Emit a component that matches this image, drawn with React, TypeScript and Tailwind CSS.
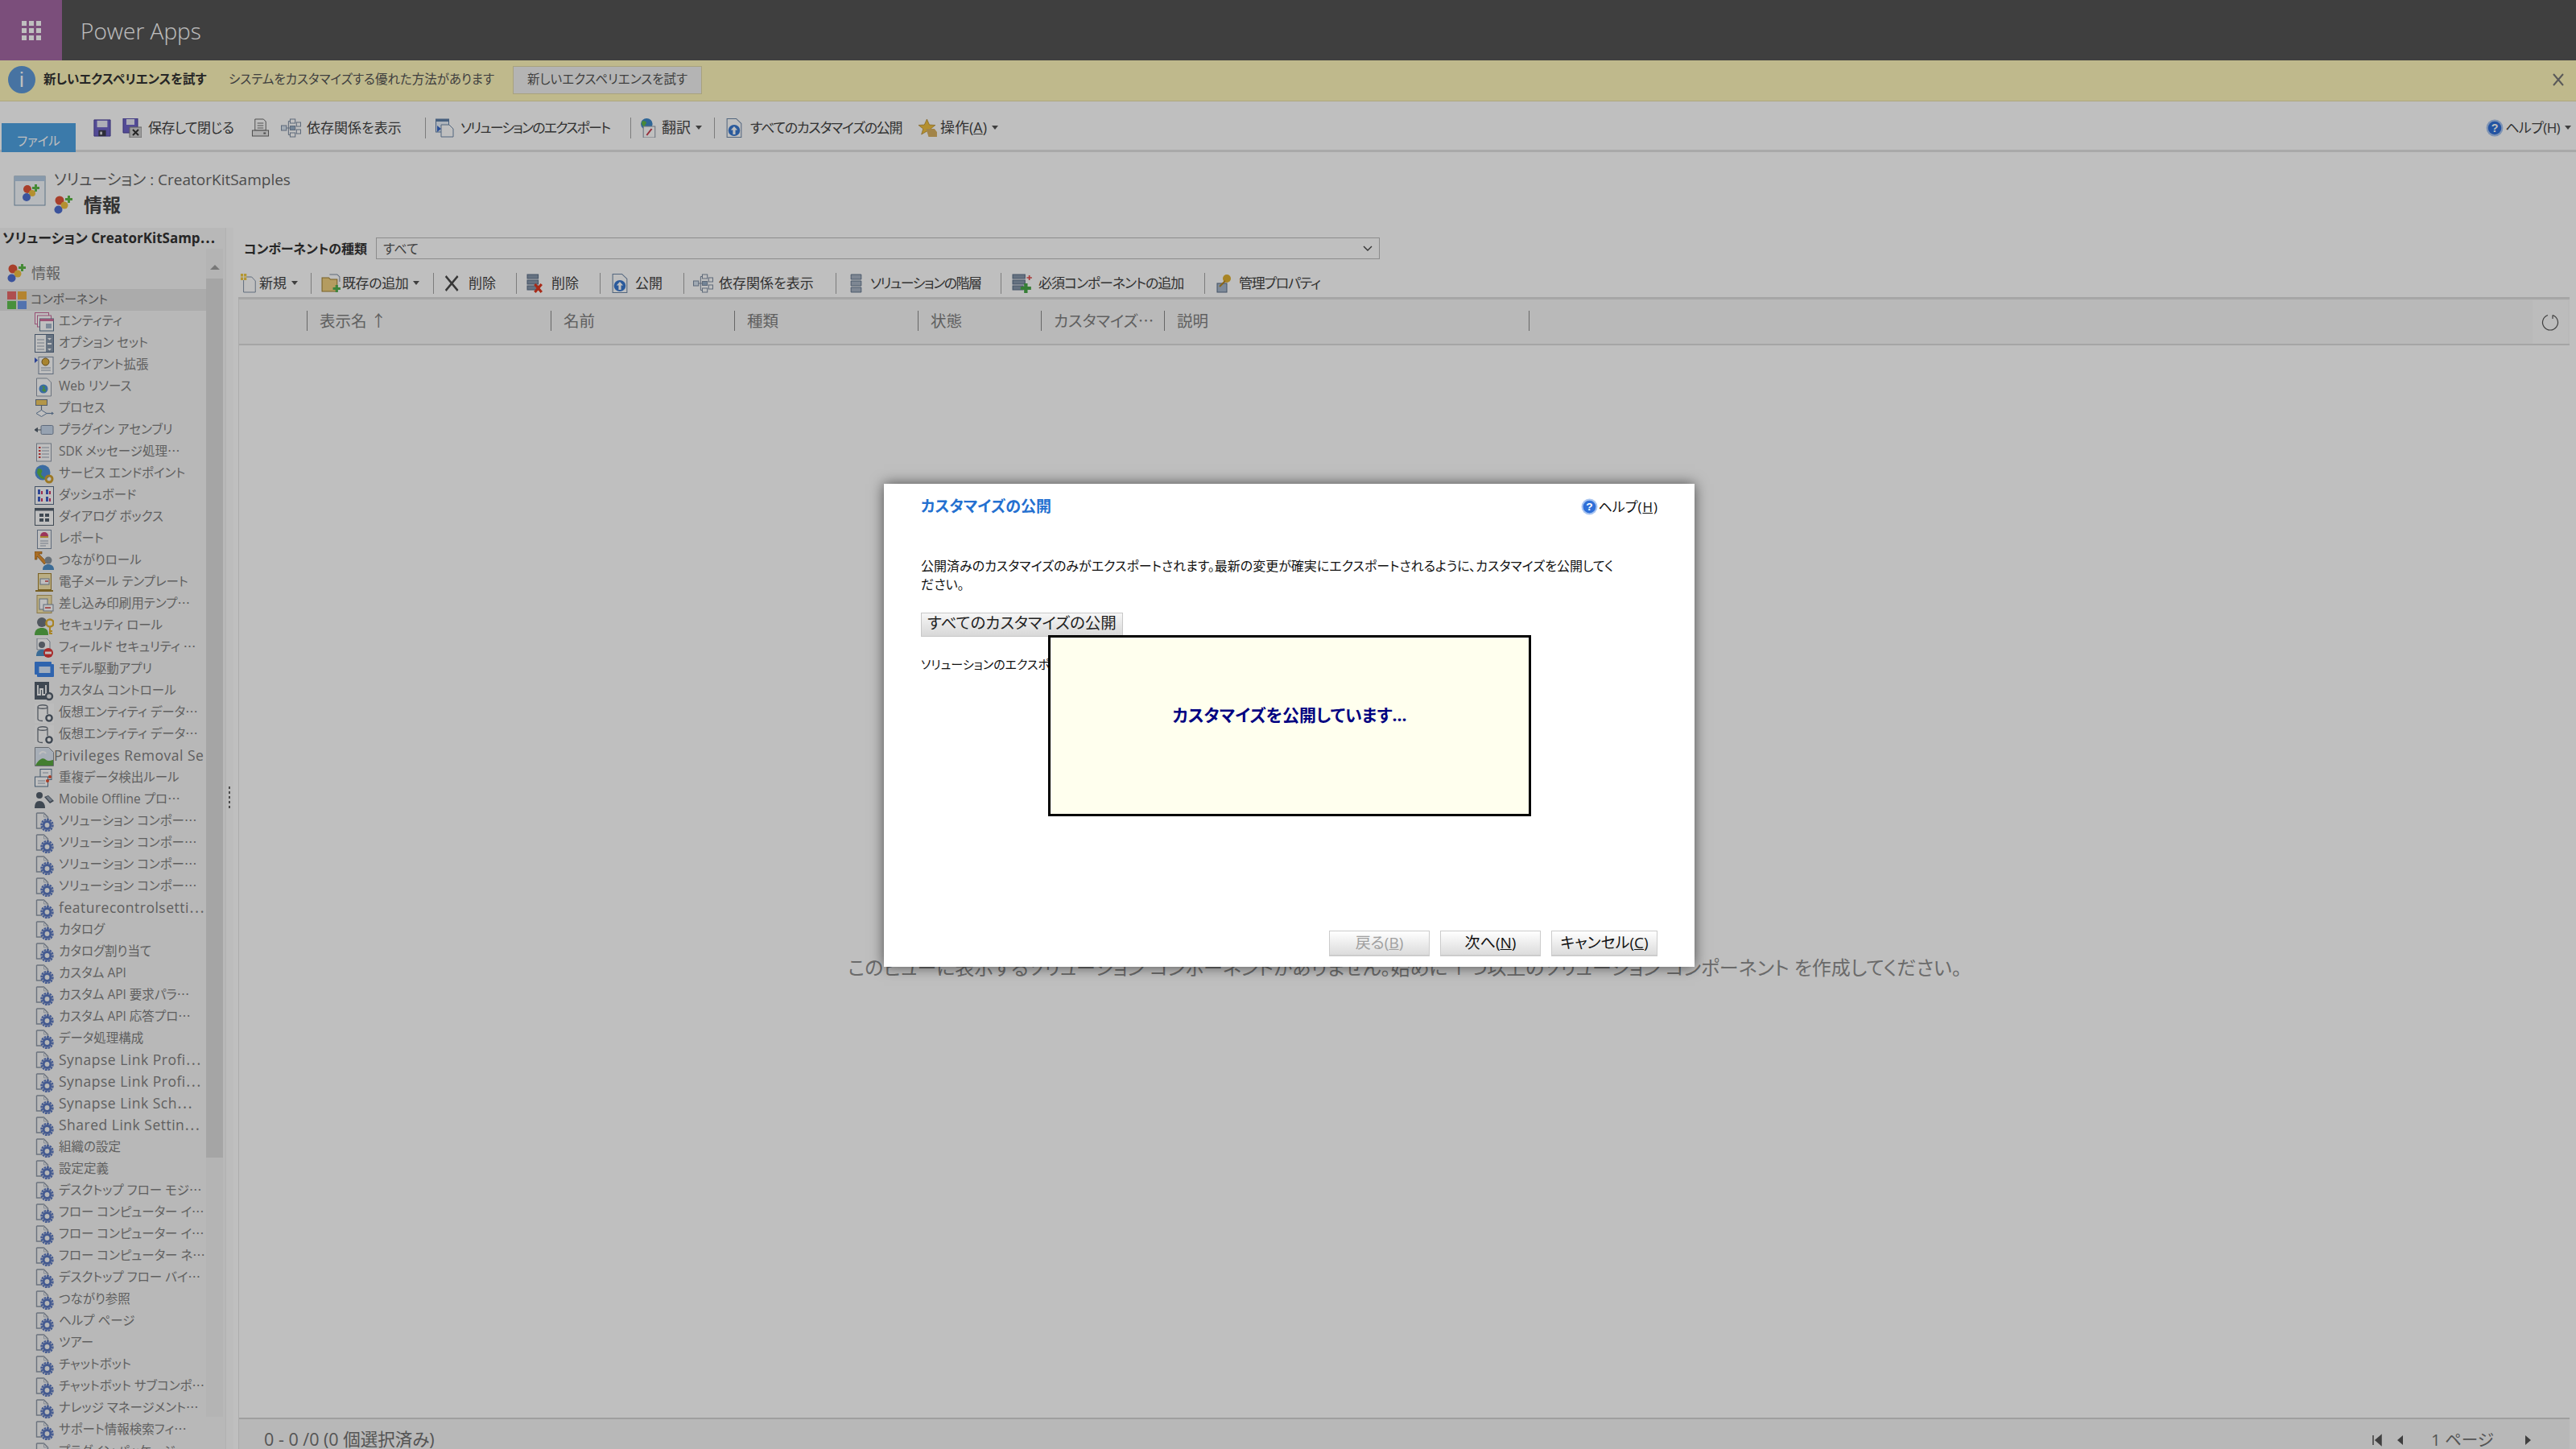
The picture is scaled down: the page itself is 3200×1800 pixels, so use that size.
import React from "react";

type IconProps = { className?: string };
type IconType = (p: IconProps) => React.ReactElement;

function Ic({ className = "w-6 h-6", children }: IconProps & { children: React.ReactNode }) {
  return (
    <svg viewBox="0 0 24 24" preserveAspectRatio="none" className={`shrink-0 ${className}`}>
      {children}
    </svg>
  );
}

function Balls({ className }: IconProps) {
  return (
    <Ic className={className}>
      <circle cx="7" cy="7" r="5.5" fill="#e0553a" />
      <circle cx="13" cy="13" r="4.5" fill="#f0c040" />
      <circle cx="5.5" cy="18.5" r="5" fill="#4f6fd0" />
      <path d="M17 1h3v3h3v3h-3v3h-3V7h-3V4h3z" fill="#5cb848" />
    </Ic>
  );
}

function Squares({ className }: IconProps) {
  return (
    <Ic className={className}>
      <rect x="0" y="0" width="11" height="11" fill="#e86a6a" />
      <rect x="13" y="0" width="11" height="11" fill="#f0b040" />
      <rect x="0" y="13" width="11" height="11" fill="#60c050" />
      <rect x="13" y="13" width="11" height="11" fill="#6e98e8" />
    </Ic>
  );
}

function GearDoc({ className }: IconProps) {
  return (
    <Ic className={className}>
      <path d="M2.500 1h9l5 5v6M2.500 1v19h7" fill="none" stroke="#8f99a8" strokeWidth="1.400" />
      <path d="M11.500 1v5h5" fill="none" stroke="#b4bcc8" strokeWidth="1" />
      <circle cx="15.500" cy="16" r="7" fill="none" stroke="#5b78c0" strokeWidth="2.400" strokeDasharray="2.600 1" />
      <circle cx="15.500" cy="16" r="4.400" fill="none" stroke="#5b78c0" strokeWidth="3" />
    </Ic>
  );
}

function Entity({ className }: IconProps) {
  return (
    <Ic className={className}>
      <rect x="0.500" y="0.500" width="17" height="14" fill="#fff" stroke="#c86a9a" />
      <rect x="3.500" y="4" width="17" height="14" fill="#fff" stroke="#c86a9a" />
      <rect x="6.500" y="8" width="17" height="15" fill="#fff" stroke="#5a7690" />
      <rect x="6.500" y="8" width="17" height="3" fill="#d0709c" />
      <rect x="14" y="14" width="7" height="6" fill="#a8b8cc" />
    </Ic>
  );
}

function OptionSet({ className }: IconProps) {
  return (
    <Ic className={className}>
      <rect x="0.500" y="0.500" width="23" height="22" fill="#fff" stroke="#5a6e88" />
      <rect x="14" y="1" width="9" height="21" fill="#8898ac" />
      <path d="M3 7h9M3 11h9M3 15h9M3 19h9" stroke="#9aa6b6" strokeWidth="1.200" />
      <path d="M16 5h5l-2.500 2.500zM16 18h5l-2.500 2.500z" fill="#fff" />
      <rect x="16" y="11" width="5" height="2" fill="#fff" />
    </Ic>
  );
}

function ClientExt({ className }: IconProps) {
  return (
    <Ic className={className}>
      <rect x="5" y="1.500" width="18" height="21" fill="#fff" stroke="#7e8ea4" />
      <circle cx="13.500" cy="7.500" r="4.500" fill="#e0b040" stroke="#806020" />
      <path d="M8 15h12M8 18h12" stroke="#9aa6b6" strokeWidth="1.200" />
      <path d="M0 2l4 3.500L0 9z" fill="#3858c8" />
    </Ic>
  );
}

function WebRes({ className }: IconProps) {
  return (
    <Ic className={className}>
      <path d="M2.500 1h13l5 5v17h-18z" fill="#fff" stroke="#8f99a8" />
      <circle cx="11" cy="14" r="5.500" fill="#4f90d8" />
      <path d="M8 10.500c3 1 4 3 1 5 1 2 3 1.500 4 2.500 2-2 0-4-1-4l1-3z" fill="#60b850" />
    </Ic>
  );
}

function Process({ className }: IconProps) {
  return (
    <Ic className={className}>
      <rect x="1.500" y="0.500" width="14" height="7" fill="#f0c860" stroke="#6e7a8a" />
      <path d="M8.500 7.500v6" stroke="#6e7a8a" strokeWidth="1.200" />
      <path d="M8.500 13.500l6.500 4-6.500 4-6.500-4z" fill="#fff" stroke="#6e88a8" />
      <path d="M15 17.500h7" stroke="#6e88a8" strokeWidth="1.200" />
      <path d="M24 17.500l-3-2v4z" fill="#6e88a8" />
    </Ic>
  );
}

function Plugin({ className }: IconProps) {
  return (
    <Ic className={className}>
      <rect x="8" y="5.500" width="15" height="11" rx="1.500" fill="#c8d8ec" stroke="#7e8ea4" />
      <path d="M0 11l3.500-2.500v5zM3 11h5" fill="#55606e" stroke="#55606e" />
    </Ic>
  );
}

function Sdk({ className }: IconProps) {
  return (
    <Ic className={className}>
      <rect x="2.500" y="1" width="18" height="22" fill="#fff" stroke="#8f99a8" />
      <path d="M9 6h9M9 10h9M9 14h9M9 18h9" stroke="#9aa6b6" strokeWidth="1.200" />
      <path d="M5 5h2.500v2H5zM5 9h2.500v2H5zM5 13h2.500v2H5zM5 17h2.500v2H5z" fill="#d84040" />
    </Ic>
  );
}

function Service({ className }: IconProps) {
  return (
    <Ic className={className}>
      <circle cx="10" cy="10" r="9.500" fill="#4f90d8" />
      <path d="M4 5c5 0 7 3 4 6 0 4 4 3 4 7-5 0-8-5-9-8z" fill="#5fb848" />
      <circle cx="18" cy="18" r="4" fill="none" stroke="#d0a030" strokeWidth="3" />
    </Ic>
  );
}

function Dashboard({ className }: IconProps) {
  return (
    <Ic className={className}>
      <rect x="0.500" y="0.500" width="23" height="22" fill="#fff" stroke="#5a6e88" />
      <path d="M4 4h3v6H4zM14 4h3v6h-3zM4 13h3v6H4zM14 13h3v6h-3z" fill="#4060c8" />
      <path d="M8 6h2v4H8zM18 6h2v4h-2zM8 15h2v4H8zM18 15h2v4h-2z" fill="#d03868" />
    </Ic>
  );
}

function DialogIc({ className }: IconProps) {
  return (
    <Ic className={className}>
      <rect x="0.500" y="0.500" width="23" height="21" fill="#fff" stroke="#55606e" />
      <rect x="0.500" y="0.500" width="23" height="3" fill="#55606e" />
      <path d="M6 7h5v4H6zM13 7h5v4h-5zM6 13h5v4H6zM13 13h5v4h-5z" fill="#55606e" />
    </Ic>
  );
}

function Report({ className }: IconProps) {
  return (
    <Ic className={className}>
      <rect x="3.500" y="0.500" width="17" height="23" fill="#fff" stroke="#7e8ea4" />
      <path d="M7 8a5 5 0 0 1 10 0z" fill="#d04878" />
      <path d="M7 8h10v2H7z" fill="#e0b040" />
      <path d="M7 14h10M7 17h10M7 20h7" stroke="#9aa6b6" strokeWidth="1.200" />
    </Ic>
  );
}

function Connection({ className }: IconProps) {
  return (
    <Ic className={className}>
      <path d="M0 0h9v3l-4 0 10 10-3 3L3 6v4H0z" fill="#e09030" stroke="#805010" strokeWidth="0.600" />
      <circle cx="17" cy="11" r="4.500" fill="#8a949e" />
      <path d="M10 23c0-5 3-7 7-7s7 2 7 7z" fill="#4f90c8" />
    </Ic>
  );
}

function Email({ className }: IconProps) {
  return (
    <Ic className={className}>
      <rect x="4.500" y="0.500" width="16" height="20" fill="#f8e8b0" stroke="#a08030" />
      <rect x="7" y="7" width="11" height="7" fill="#fff" stroke="#7e8ea4" />
      <path d="M13 10h4" stroke="#d04040" strokeWidth="1.500" />
      <path d="M1 21h22v2H1z" fill="#a08030" />
    </Ic>
  );
}

function MailMerge({ className }: IconProps) {
  return (
    <Ic className={className}>
      <rect x="3" y="0.500" width="18" height="22" fill="#f8e8b0" stroke="#b8a060" />
      <rect x="6" y="5" width="10" height="13" fill="#fff" stroke="#7e8ea4" />
      <rect x="11" y="12" width="12" height="8" fill="#fff" stroke="#7e8ea4" />
      <path d="M13 16h7" stroke="#d04040" strokeWidth="1.500" />
    </Ic>
  );
}

function Security({ className }: IconProps) {
  return (
    <Ic className={className}>
      <circle cx="9" cy="7" r="6" fill="#6e7680" />
      <path d="M0 23c0-7 4-9 9-9s8 2 8 9z" fill="#58b048" />
      <circle cx="19" cy="8" r="4.500" fill="none" stroke="#e0b030" strokeWidth="2.600" />
      <path d="M19 12v10M19 18h3M19 21h3" stroke="#e0b030" strokeWidth="2" />
    </Ic>
  );
}

function FieldSec({ className }: IconProps) {
  return (
    <Ic className={className}>
      <path d="M3 0h12l4 4v10H3z" fill="#fff" stroke="#8f99a8" />
      <circle cx="9" cy="8" r="4" fill="#6e7680" />
      <path d="M2 22c0-6 3-8 7-8s6 2 6 8z" fill="#4f90c8" />
      <circle cx="17" cy="18" r="6" fill="#e03838" />
      <rect x="13" y="16.500" width="8" height="3" fill="#fff" />
    </Ic>
  );
}

function AppIc({ className }: IconProps) {
  return (
    <Ic className={className}>
      <rect x="0" y="2" width="21" height="16" rx="1" fill="#3f86e8" />
      <rect x="3" y="5" width="21" height="16" rx="1" fill="#3f86e8" />
      <rect x="5.500" y="8" width="14" height="8" fill="#d8e8fc" />
    </Ic>
  );
}

function CustomControl({ className }: IconProps) {
  return (
    <Ic className={className}>
      <rect x="0" y="0" width="18" height="22" fill="#55606e" />
      <path d="M4 4v12h3V9h3v7h4V4" fill="none" stroke="#fff" strokeWidth="1.800" />
      <circle cx="18" cy="18" r="4" fill="#e8e8e8" stroke="#55606e" strokeWidth="2.400" />
    </Ic>
  );
}

function Database({ className }: IconProps) {
  return (
    <Ic className={className}>
      <rect x="0" y="0" width="24" height="24" fill="#fbfbfb" />
      <path d="M4 4c0-3 12-3 12 0v9M4 4c0 3 12 3 12 0M4 4v15c0 2 3 2.500 6 2.500" fill="none" stroke="#6e7680" strokeWidth="1.300" />
      <circle cx="18" cy="18" r="3.600" fill="#fff" stroke="#55606e" strokeWidth="2.400" />
    </Ic>
  );
}

function BrokenImg({ className }: IconProps) {
  return (
    <Ic className={className}>
      <path d="M0.500 0.500h17l6 6v17h-23z" fill="#dfe8f4" stroke="#8a8f96" />
      <path d="M1 23c4-8 9-10 12-8 3 3 6 2 10 1v7z" fill="#5aa840" />
      <path d="M6 9c3-5 7-3 8-1" fill="none" stroke="#fff" strokeWidth="2" />
    </Ic>
  );
}

function Duplicate({ className }: IconProps) {
  return (
    <Ic className={className}>
      <rect x="7" y="0.500" width="14" height="13" fill="#fff" stroke="#5a7690" />
      <rect x="0.500" y="10" width="16" height="12" fill="#fff" stroke="#5a7690" />
      <path d="M10 5h7M4 15h9M4 18h9" stroke="#9aa6b6" />
      <circle cx="19" cy="10" r="2" fill="#e05030" />
      <circle cx="16" cy="15" r="2" fill="#e05030" />
    </Ic>
  );
}

function Mobile({ className }: IconProps) {
  return (
    <Ic className={className}>
      <circle cx="6" cy="6" r="4" fill="#55606e" />
      <path d="M0 22c0-6 2-9 6-9s7 3 7 9z" fill="#55606e" />
      <path d="M12 8l5-2 7 7-5 3z" fill="#55606e" />
      <path d="M14 8l3-1 5 5-3 2z" fill="#9aa6b6" />
    </Ic>
  );
}

function FloppyIc({ className }: IconProps) {
  return (
    <Ic className={className}>
      <path d="M1 1h22v22H1z" fill="#6f64c8" stroke="#484098" />
      <rect x="5" y="2" width="14" height="9" fill="#e8e8f4" />
      <rect x="7" y="15" width="10" height="8" fill="#3c3c4c" />
      <rect x="9" y="17" width="3" height="4" fill="#d8d8e0" />
    </Ic>
  );
}

function SaveClose({ className }: IconProps) {
  return (
    <Ic className={className}>
      <path d="M1 0h18v18H1z" fill="#6f64c8" stroke="#484098" />
      <rect x="5" y="1" width="10" height="7" fill="#e8e8f4" />
      <rect x="9" y="11" width="15" height="13" fill="#d0d0d0" stroke="#808080" />
      <path d="M13 14l7 7M20 14l-7 7" stroke="#333" strokeWidth="2" />
    </Ic>
  );
}

function Printer({ className }: IconProps) {
  return (
    <Ic className={className}>
      <path d="M5 1h11l3 3v11H5z" fill="#fff" stroke="#666" />
      <path d="M8 6h8M8 9h8M8 12h8" stroke="#666" />
      <rect x="1.500" y="15" width="21" height="7" fill="#e8e8e8" stroke="#666" />
      <rect x="16" y="17.500" width="3" height="2" fill="#666" />
    </Ic>
  );
}

function Dependencies({ className }: IconProps) {
  return (
    <Ic className={className}>
      <rect x="0.500" y="9" width="6" height="6" fill="#d8e4f0" stroke="#7e8ea4" />
      <rect x="11" y="1" width="6" height="5" fill="#fff" stroke="#7e8ea4" />
      <rect x="11" y="9.500" width="6" height="5" fill="#9ab0c8" stroke="#7e8ea4" />
      <rect x="11" y="18" width="6" height="5" fill="#fff" stroke="#7e8ea4" />
      <rect x="18.500" y="5" width="5" height="5" fill="#fff" stroke="#7e8ea4" />
      <rect x="18.500" y="14" width="5" height="5" fill="#fff" stroke="#7e8ea4" />
      <path d="M6.500 12H11M9 3.500v17M9 3.500h2M9 20.500h2" fill="none" stroke="#7e8ea4" />
    </Ic>
  );
}

function ExportIc({ className }: IconProps) {
  return (
    <Ic className={className}>
      <rect x="0.500" y="1" width="16" height="16" fill="#e8f0fa" stroke="#6080a8" />
      <rect x="0.500" y="1" width="16" height="3" fill="#6080a8" />
      <path d="M7 8h10l5 5v10H7z" fill="#fff" stroke="#6e88a8" />
      <path d="M2 9l5 4-5 4z" fill="#3868c8" />
    </Ic>
  );
}

function Translate({ className }: IconProps) {
  return (
    <Ic className={className}>
      <circle cx="8" cy="7" r="7" fill="#3f88c8" />
      <path d="M3 3c5 0 6 3 3 5 0 3 2 3 3 5-4 0-6-4-7-7z" fill="#60b848" />
      <path d="M4 10h14v14H4z" fill="#fff" stroke="#8f99a8" />
      <path d="M14 13l-6 8" stroke="#c84050" strokeWidth="2" />
    </Ic>
  );
}

function Publish({ className }: IconProps) {
  return (
    <Ic className={className}>
      <path d="M3 0.500h11l6 6v17H3z" fill="#fff" stroke="#6e88a8" />
      <circle cx="11.500" cy="15" r="7" fill="#3878d0" />
      <path d="M11.500 10l-4 4.500h2.500V20h3v-5.500h2.500z" fill="#fff" />
    </Ic>
  );
}

function Star({ className }: IconProps) {
  return (
    <Ic className={className}>
      <path d="M10 1l3 7 7 .5-5.500 4.500 2 7-6.500-4-6.500 4 2-7L0 8.500 7 8z" fill="#f0c040" stroke="#a07820" strokeWidth="0.600" />
      <path d="M9 13h10l3 4v6H12z" fill="#d8b060" />
    </Ic>
  );
}

function Help({ className }: IconProps) {
  return (
    <svg viewBox="0 0 20 20" className={`shrink-0 ${className}`}>
      <circle cx="10" cy="10" r="9.500" fill="#a8c4f0" />
      <circle cx="10" cy="10" r="7.500" fill="#2f6fd8" />
      <text x="10" y="14.500" textAnchor="middle" fontSize="13" fontWeight="700" fill="#fff" fontFamily="Liberation Sans">
        ?
      </text>
    </svg>
  );
}

function NewDoc({ className }: IconProps) {
  return (
    <Ic className={className}>
      <path d="M5 4h11l5 5v14H5z" fill="#fff" stroke="#7e8ea4" />
      <rect x="1" y="0" width="8" height="8" fill="#f0c840" />
      <path d="M1 4h8M5 0v8" stroke="#fff" />
    </Ic>
  );
}

function AddExisting({ className }: IconProps) {
  return (
    <Ic className={className}>
      <path d="M1 5h8l2 2h8v15H1z" fill="#f0d080" stroke="#a08030" />
      <path d="M10 1h9l3 3v6" fill="none" stroke="#7e8ea4" />
      <path d="M17 14h3v3h3v3h-3v3h-3v-3h-3v-3h3z" fill="#50b050" />
    </Ic>
  );
}

function DeleteX({ className }: IconProps) {
  return (
    <Ic className={className}>
      <path d="M3 2l8 8 8-8 2 2-8 8 8 8-2 2-8-8-8 8-2-2 8-8-8-8z" fill="#4a4a4a" />
    </Ic>
  );
}

function DeleteStack({ className }: IconProps) {
  return (
    <Ic className={className}>
      <path d="M1 1h13v5H1zM1 8h13v5H1zM1 15h13v5H1z" fill="#8898ac" stroke="#5a6e88" />
      <path d="M10 13l8 10M18 13l-8 10" stroke="#e03820" strokeWidth="3" />
    </Ic>
  );
}

function Hierarchy({ className }: IconProps) {
  return (
    <Ic className={className}>
      <path d="M4 1h16v6H4zM4 9h16v6H4zM4 17h16v6H4z" fill="#a8b4c4" stroke="#5a6e88" />
    </Ic>
  );
}

function AddRequired({ className }: IconProps) {
  return (
    <Ic className={className}>
      <path d="M1 1h14v5H1zM1 8h14v5H1zM1 15h12v5H1z" fill="#8898ac" stroke="#5a6e88" />
      <path d="M14 12h4v4h4v4h-4v4h-4v-4h-4v-4h4z" fill="#48a848" />
      <path d="M20 2v6M17 5h6" stroke="#e05050" strokeWidth="1.600" />
    </Ic>
  );
}

function Admin({ className }: IconProps) {
  return (
    <Ic className={className}>
      <rect x="3" y="12" width="12" height="11" fill="#a8b8cc" stroke="#5a6e88" />
      <circle cx="15" cy="6" r="5" fill="#e0b030" />
      <path d="M13 9l-7 7" stroke="#b88820" strokeWidth="2" />
    </Ic>
  );
}

const Caret = () => <span className="ml-[6px] h-0 w-0 border-x-[4px] border-t-[5px] border-x-transparent border-t-[#555]" />;

const navItems: [string, IconType][] = [
  ["エンティティ", Entity],
  ["オプション セット", OptionSet],
  ["クライアント拡張", ClientExt],
  ["Web リソース", WebRes],
  ["プロセス", Process],
  ["プラグイン アセンブリ", Plugin],
  ["SDK メッセージ処理⋯", Sdk],
  ["サービス エンドポイント", Service],
  ["ダッシュボード", Dashboard],
  ["ダイアログ ボックス", DialogIc],
  ["レポート", Report],
  ["つながりロール", Connection],
  ["電子メール テンプレート", Email],
  ["差し込み印刷用テンプ⋯", MailMerge],
  ["セキュリティ ロール", Security],
  ["フィールド セキュリティ ⋯", FieldSec],
  ["モデル駆動アプリ", AppIc],
  ["カスタム コントロール", CustomControl],
  ["仮想エンティティ データ⋯", Database],
  ["仮想エンティティ データ⋯", Database],
  ["Privileges Removal Se", BrokenImg],
  ["重複データ検出ルール", Duplicate],
  ["Mobile Offline プロ⋯", Mobile],
  ["ソリューション コンポー⋯", GearDoc],
  ["ソリューション コンポー⋯", GearDoc],
  ["ソリューション コンポー⋯", GearDoc],
  ["ソリューション コンポー⋯", GearDoc],
  ["featurecontrolsetti⋯", GearDoc],
  ["カタログ", GearDoc],
  ["カタログ割り当て", GearDoc],
  ["カスタム API", GearDoc],
  ["カスタム API 要求パラ⋯", GearDoc],
  ["カスタム API 応答プロ⋯", GearDoc],
  ["データ処理構成", GearDoc],
  ["Synapse Link Profi⋯", GearDoc],
  ["Synapse Link Profi⋯", GearDoc],
  ["Synapse Link Sch⋯", GearDoc],
  ["Shared Link Settin⋯", GearDoc],
  ["組織の設定", GearDoc],
  ["設定定義", GearDoc],
  ["デスクトップ フロー モジ⋯", GearDoc],
  ["フロー コンピューター イ⋯", GearDoc],
  ["フロー コンピューター イ⋯", GearDoc],
  ["フロー コンピューター ネ⋯", GearDoc],
  ["デスクトップ フロー バイ⋯", GearDoc],
  ["つながり参照", GearDoc],
  ["ヘルプ ページ", GearDoc],
  ["ツアー", GearDoc],
  ["チャットボット", GearDoc],
  ["チャットボット サブコンポ⋯", GearDoc],
  ["ナレッジ マネージメント⋯", GearDoc],
  ["サポート情報検索フィ⋯", GearDoc],
  ["プラグイン パッケージ", GearDoc],
];

const columns = [
  { label: "表示名 ↑", width: "w-[303px]" },
  { label: "名前", width: "w-[228px]" },
  { label: "種類", width: "w-[228px]" },
  { label: "状態", width: "w-[153px]" },
  { label: "カスタマイズ⋯", width: "w-[153px]" },
  { label: "説明", width: "w-[453px]" },
];

const componentTools: {
  Icon: IconType;
  icon: string;
  label: string;
  width: string;
  gap: string;
  track?: string;
  caret?: boolean;
}[] = [
  { Icon: AddExisting, icon: "ml-3 h-6 w-[25px]", label: "既存の追加", width: "w-[152px]", gap: "ml-px", track: "tracking-[-0.4px]", caret: true },
  { Icon: DeleteX, icon: "ml-[13px] h-6 w-5", label: "削除", width: "w-[103px]", gap: "ml-[10px]" },
  { Icon: DeleteStack, icon: "ml-3 h-6 w-[25px]", label: "削除", width: "w-[104px]", gap: "ml-[6px]" },
  { Icon: Publish, icon: "ml-3 h-6 w-[25px]", label: "公開", width: "w-[104px]", gap: "ml-[6px]" },
  { Icon: Dependencies, icon: "ml-[11px] h-6 w-[25px]", label: "依存関係を表示", width: "w-[189px]", gap: "ml-[7px]" },
  { Icon: Hierarchy, icon: "ml-[15px] h-6 w-[19px]", label: "ソリューションの階層", width: "w-[205px]", gap: "ml-2", track: "tracking-[-1.5px]" },
  { Icon: AddRequired, icon: "ml-[13px] h-6 w-[26px]", label: "必須コンポーネントの追加", width: "w-[253px]", gap: "ml-[7px]", track: "tracking-[-1.1px]" },
  { Icon: Admin, icon: "ml-3 h-6 w-6", label: "管理プロパティ", width: "w-[180px]", gap: "ml-[6px]", track: "tracking-[-1.3px]" },
];

function Sidebar() {
  return (
    <div className="flex w-[280px] shrink-0 flex-col overflow-hidden bg-[#f6f6f6]">
      <div className="flex h-[26px] shrink-0 items-center pl-[3px] text-[17px] font-bold whitespace-nowrap text-[#333]">
        ソリューション CreatorKitSamp⋯
      </div>
      <div className="flex min-h-0 flex-1">
        <div className="w-[256px] shrink-0 overflow-hidden text-[15.5px] text-[#808080]">
          <div className="flex h-[50px] items-center gap-[6px] pt-[10px] pl-[9px]">
            <Balls />
            <span className="text-[18px]">情報</span>
          </div>
          <div className="flex h-[27px] items-center gap-[5px] bg-[#e4e4e4] pl-[9px]">
            <Squares className="h-[22px] w-6" />
            <span className="-translate-y-px text-[15px] text-[#707070]">コンポーネント</span>
          </div>
          {navItems.map(([label, Icon], i) => {
            const wide = /^(Privileges|Synapse|Shared|feature)/.test(label);
            return (
              <div key={i} className="flex h-[27px] items-center gap-[6px] overflow-hidden pl-[43px] whitespace-nowrap">
                <Icon className={label.startsWith("Privileges") ? "h-6 w-6 -mr-[6px]" : "h-6 w-6"} />
                <span className={wide ? "-translate-y-px text-[17.5px] tracking-[0.5px]" : "-translate-y-px"}>{label}</span>
              </div>
            );
          })}
        </div>
        <div className="flex h-[1451px] w-[21px] flex-col bg-[#f1f1f1]">
          <div className="flex h-[37px] items-center justify-center pt-[8px]">
            <span className="h-0 w-0 border-x-[6px] border-b-[6px] border-x-transparent border-b-[#a0a0a0]" />
          </div>
          <div className="h-[1092px] bg-[#dcdcdc]" />
        </div>
      </div>
    </div>
  );
}

function VLine() {
  return <span className="h-[26px] w-px shrink-0 bg-[#a6a6a6]" />;
}

function Toolbar() {
  return (
    <div className="flex h-[63px] shrink-0 border-b-[3px] border-[#e2e2e2] text-[17px] text-[#444]">
      <div className="mt-[27px] ml-[2px] flex h-[36px] w-[92px] items-end justify-center bg-[#4fa3e3] pb-[2px] text-[15.5px] text-[#fff]">ファイル</div>
      <div className="flex h-[60px] flex-1 items-center pt-[5px]">
        <div className="flex w-[434px] shrink-0 items-center">
          <FloppyIc className="ml-[22px] h-[22px] w-[22px]" />
          <SaveClose className="ml-[14px] h-6 w-6" />
          <span className="ml-2 w-[128px] tracking-[-0.6px]">保存して閉じる</span>
          <Printer className="h-6 w-[23px]" />
          <Dependencies className="ml-[14px] h-6 w-[25px]" />
          <span className="ml-[7px]">依存関係を表示</span>
        </div>
        <div className="flex w-[255px] shrink-0 items-center">
          <VLine />
          <ExportIc className="ml-3 h-6 w-6" />
          <span className="ml-[7px] tracking-[-1.85px]">ソリューションのエクスポート</span>
        </div>
        <div className="flex w-[104px] shrink-0 items-center">
          <VLine />
          <Translate className="ml-[11px] h-6 w-[25px]" />
          <span className="ml-[2px] text-[18px]">翻訳</span>
          <Caret />
        </div>
        <VLine />
        <Publish className="ml-3 h-6 w-[25px]" />
        <span className="ml-[7px] w-[208px] tracking-[-1.25px]">すべてのカスタマイズの公開</span>
        <Star className="ml-px h-6 w-[25px]" />
        <span className="ml-[2px] text-[18px]">
          操作(<u>A</u>)
        </span>
        <Caret />
        <div className="ml-auto flex items-center pr-[6px]">
          <Help className="h-[22px] w-[22px]" />
          <span className="ml-[2px] tracking-[-0.6px]">ヘルプ(H)</span>
          <Caret />
        </div>
      </div>
    </div>
  );
}

function ComponentToolbar() {
  return (
    <div className="ml-[6px] flex h-[40px] shrink-0 items-center border-b-[3px] border-[#dedede] pt-[2px] text-[17px] text-[#444]">
      <div className="flex w-[90px] shrink-0 items-center pl-[2px]">
        <NewDoc className="h-6 w-[22px]" />
        <span className="ml-[2px]">新規</span>
        <Caret />
      </div>
      {componentTools.map((t, i) => (
        <div key={i} className={`flex shrink-0 items-center ${t.width}`}>
          <VLine />
          <t.Icon className={t.icon} />
          <span className={`whitespace-nowrap ${t.gap} ${t.track ?? ""}`}>{t.label}</span>
          {t.caret && <Caret />}
        </div>
      ))}
    </div>
  );
}

function Content() {
  return (
    <div className="flex min-w-0 flex-1 flex-col pr-2">
      <div className="flex h-[49px] shrink-0 items-center pt-[2px] pl-[13px]">
        <span className="w-[164px] text-[16px] font-bold whitespace-nowrap text-[#333]">コンポーネントの種類</span>
        <div className="flex h-[27px] w-[1247px] items-center justify-between border border-[#bbb] bg-white pr-[8px] pl-[8px] text-[16px] text-[#555]">
          <span>すべて</span>
          <svg viewBox="0 0 12 8" className="h-2 w-3">
            <path d="M1 1l5 5 5-5" fill="none" stroke="#444" strokeWidth="1.400" />
          </svg>
        </div>
      </div>
      <ComponentToolbar />
      <div className="ml-[6px] flex min-h-0 flex-1 flex-col border-l border-[#e6e6e6]">
        <div className="flex h-[57px] shrink-0 items-center border-b-[2px] border-[#dcdcdc] bg-[#f7f7f7] pb-[2px] pl-[84px] text-[19.5px] text-[#808080]">
          {columns.map((c) => (
            <div key={c.label} className={`flex h-[25px] items-center border-l border-[#8a8a8a] pl-[15px] ${c.width}`}>
              <span className="whitespace-nowrap">{c.label}</span>
            </div>
          ))}
          <div className="h-[25px] border-l border-[#8a8a8a]" />
          <div className="mt-[2px] mr-[2px] ml-auto flex h-[54px] w-[44px] items-center justify-center bg-[#fbfbfb]">
            <svg viewBox="0 0 24 24" className="h-6 w-6">
              <path d="M9 3.500A9.500 9.500 0 1 0 15 3.500M15 3.500V8" fill="none" stroke="#555" strokeWidth="1.200" />
            </svg>
          </div>
        </div>
        <div className="min-h-0 flex-1 pt-[755px] pl-[1px] text-center text-[24px] whitespace-nowrap text-[#8e8e8e]">
          このビューに表示するソリューション コンポーネントがありません。始めに 1 つ以上のソリューション コンポーネント を作成してください。
        </div>
        <div className="flex h-[39px] shrink-0 items-end border-t-[2px] border-[#d4d4d4] bg-[#f6f6f6] pr-[43px] pl-[31px] text-[21.5px] text-[#707070]">
          <span className="translate-y-[4px]">0 - 0 /0 (0 個選択済み)</span>
          <div className="ml-auto flex translate-y-[4px] items-center text-[20.5px]">
            <svg viewBox="0 0 16 16" className="h-4 w-4">
              <path d="M2 2v12M12 2L5 8l7 6z" stroke="#555" strokeWidth="1.500" fill="#555" />
            </svg>
            <svg viewBox="0 0 16 16" className="ml-[11px] h-4 w-4">
              <path d="M12 2L5 8l7 6z" fill="#555" />
            </svg>
            <span className="ml-[31px] w-[82px] whitespace-nowrap">1 ページ</span>
            <svg viewBox="0 0 16 16" className="ml-[31px] h-4 w-4">
              <path d="M4 2l7 6-7 6z" fill="#555" />
            </svg>
          </div>
        </div>
      </div>
    </div>
  );
}

function PublishDialog() {
  return (
    <div className="absolute inset-0 z-10 bg-black/25">
      <div className="absolute top-[601px] left-[1098px] flex h-[600px] w-[1007px] flex-col bg-white px-[46px] text-[#111] shadow-[0_0_16px_rgba(0,0,0,0.6)]">
        <div className="mt-[14px] flex items-center justify-between">
          <span className="text-[19px] font-bold text-[#2470d0]">カスタマイズの公開</span>
          <span className="flex items-center gap-px text-[17px]">
            <Help className="h-[21px] w-[21px]" />
            ヘルプ(<u>H</u>)
          </span>
        </div>
        <p className="mt-[48px] text-[16px] leading-[23px] whitespace-nowrap">
          公開済みのカスタマイズのみがエクスポートされます。最新の変更が確実にエクスポートされるように、カスタマイズを公開してく
          <br />
          ださい。
        </p>
        <button className="mt-[23px] h-[30px] w-[251px] border border-[#c8c8c8] bg-linear-to-b from-[#f6f6f6] to-[#d8d8d8] pb-[3px] text-[19.5px] leading-none whitespace-nowrap text-[#222]">
          すべてのカスタマイズの公開
        </button>
        <p className="mt-[23px] text-[15px] whitespace-nowrap">ソリューションのエクスポートを続行するには、[次へ] をクリックしてください。</p>
        <div className="mt-auto mb-[13px] flex justify-end gap-[13px] text-[19px] leading-none">
          <button className="h-[32px] w-[125px] border border-[#ccc] border-b-2 bg-linear-to-b from-white to-[#dcdcdc] text-[#a0a0a0]">
            戻る(<u>B</u>)
          </button>
          <button className="h-[32px] w-[125px] border border-[#ccc] border-b-2 bg-linear-to-b from-white to-[#dcdcdc]">
            次へ(<u>N</u>)
          </button>
          <button className="h-[32px] w-[132px] border border-[#ccc] border-b-2 bg-linear-to-b from-white to-[#dcdcdc] whitespace-nowrap">
            キャンセル(<u>C</u>)
          </button>
        </div>
        <div className="absolute top-[188px] left-[204px] flex h-[225px] w-[600px] items-center justify-center border-[3px] border-black bg-[#ffffee] pb-[26px] text-[21px] font-bold text-[#000080]">
          カスタマイズを公開しています...
        </div>
      </div>
    </div>
  );
}

export default function App() {
  return (
    <div className="relative flex h-[1800px] w-[3200px] flex-col overflow-hidden bg-white font-['Open_Sans','Noto_Sans_CJK_JP',sans-serif] [font-feature-settings:'palt']">
      <div className="flex h-[75px] shrink-0 items-center bg-[#555]">
        <div className="flex h-full w-[77px] items-center justify-center bg-[#a468a4]">
          <div className="grid grid-cols-3 gap-[3px]">
            {Array.from({ length: 9 }).map((_, i) => (
              <span key={i} className="h-[6px] w-[6px] bg-white" />
            ))}
          </div>
        </div>
        <span className="ml-[23px] text-[28px] font-light text-white">Power Apps</span>
      </div>

      <div className="flex h-[51px] shrink-0 items-center border-b border-[#e8dfa8] bg-[#fff7bb] pb-[2px] pl-[10px] text-[15.5px] text-[#555]">
        <span className="flex h-[34px] w-[34px] items-center justify-center rounded-full bg-[#5f9ad8] font-['Liberation_Sans',sans-serif] text-[26px] text-white">i</span>
        <span className="ml-[10px] w-[230px] font-bold whitespace-nowrap text-[#333]">新しいエクスペリエンスを試す</span>
        <span className="w-[353px] whitespace-nowrap">システムをカスタマイズする優れた方法があります</span>
        <span className="flex h-[35px] w-[235px] items-center justify-center border border-[#e0d9a8] bg-[#f0f0f0]">新しいエクスペリエンスを試す</span>
        <svg viewBox="0 0 16 16" className="mr-[14px] ml-auto h-4 w-4">
          <path d="M2 1l12 14M14 1L2 15" stroke="#777" strokeWidth="2" />
        </svg>
      </div>

      <Toolbar />

      <div className="flex h-[94px] shrink-0 items-start">
        <div className="mt-[26px] ml-[10px] h-12 w-12 shrink-0">
          <svg viewBox="0 0 48 48" className="h-12 w-12">
            <rect x="8" y="4" width="38" height="36" fill="#f4f8fc" stroke="#7e9ab4" />
            <rect x="8" y="4" width="38" height="6" fill="#b4cce4" />
            <circle cx="24" cy="20" r="5" fill="#e0553a" />
            <circle cx="30" cy="25" r="4" fill="#f0c040" />
            <circle cx="23" cy="30" r="5" fill="#4f6fd0" />
            <path d="M33 14h3v3h3v3h-3v3h-3v-3h-3v-3h3z" fill="#5cb848" />
          </svg>
        </div>
        <div className="ml-[9px] flex flex-col">
          <span className="mt-[20px] text-[19px] leading-[28px] whitespace-nowrap text-[#666]">ソリューション : CreatorKitSamples</span>
          <div className="mt-[2px] flex items-center gap-[13px]">
            <Balls className="h-6 w-6" />
            <span className="text-[23px] leading-[30px] font-bold text-[#444]">情報</span>
          </div>
        </div>
      </div>

      <div className="flex min-h-0 flex-1">
        <Sidebar />
        <div className="relative w-[10px] shrink-0 border-l border-[#ececec] bg-[#fbfbfb]">
          <div className="absolute top-[694px] left-[3px] flex flex-col gap-[3px]">
            {Array.from({ length: 5 }).map((_, i) => (
              <span key={i} className="h-[3px] w-[2px] bg-[#666]" />
            ))}
          </div>
        </div>
        <Content />
      </div>

      <PublishDialog />
    </div>
  );
}
